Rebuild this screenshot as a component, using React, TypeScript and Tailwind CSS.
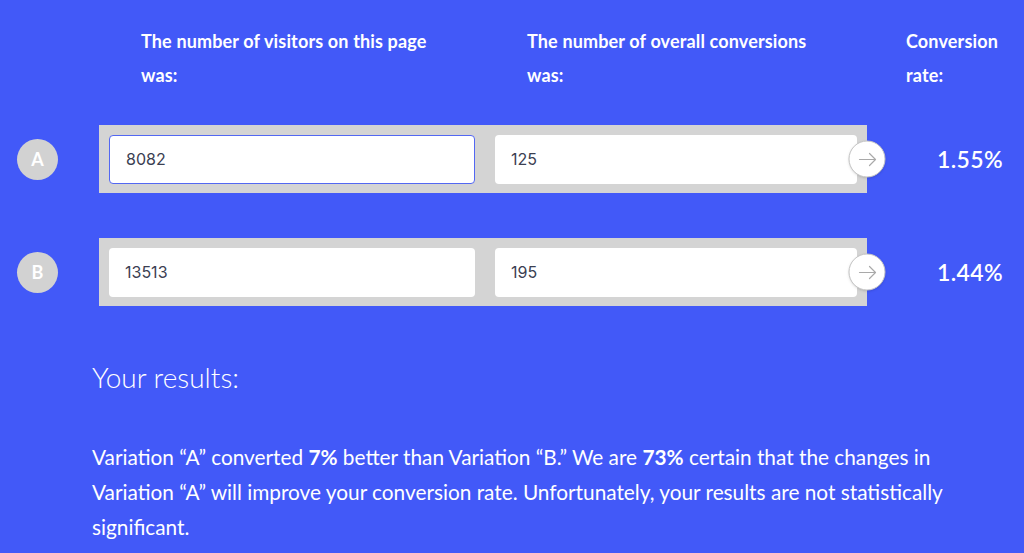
import React from 'react';

type Row = { label: string; visitors: string; conversions: string; rate: string; focused?: boolean };

const rows: Row[] = [
  { label: 'A', visitors: '8082', conversions: '125', rate: '1.55%', focused: true },
  { label: 'B', visitors: '13513', conversions: '195', rate: '1.44%' },
];

const ArrowButton = () => (
  <div className="absolute right-0 top-1/2 translate-x-1/2 -translate-y-1/2 w-[37px] h-[37px] rounded-full bg-white border border-[#c4c4c4] shadow-sm flex items-center justify-center">
    <svg width="22" height="22" viewBox="0 0 22 22" fill="none" stroke="#a9a9a9" strokeWidth="1.2" strokeLinecap="round" strokeLinejoin="round">
      <line x1="3" y1="11" x2="19" y2="11" />
      <polyline points="13,5 19,11 13,17" />
    </svg>
  </div>
);

const InputRow = ({ row }: { row: Row }) => (
  <div className="flex items-center">
    <div className="ml-[17px] w-[41px] h-[41px] rounded-full bg-[#d2d2d2] flex items-center justify-center text-white text-[18px] font-bold">
      {row.label}
    </div>
    <div className="relative ml-[41px] w-[768px] h-[68px] bg-[#d4d4d4] flex items-center gap-[20px] px-[10px]">
      <div
        className={`w-[366px] h-[49px] bg-white rounded-[4px] flex items-center pl-[16px] text-[16px] text-[#3b4052] font-['Inter'] ${
          row.focused ? 'border border-[#5367f2]' : ''
        }`}
      >
        {row.visitors}
      </div>
      <div className="flex-1 h-[49px] bg-white rounded-[4px] flex items-center pl-[16px] text-[16px] text-[#3b4052] font-['Inter']">
        {row.conversions}
      </div>
      <ArrowButton />
    </div>
    <div className="ml-[70px] text-white text-[23px] tracking-[0.4px] font-semibold">{row.rate}</div>
  </div>
);

export default function App() {
  return (
    <div className="w-[1024px] h-[553px] overflow-hidden bg-[#4259f8] font-['Lato','Liberation_Sans',sans-serif] text-white">
      {/* Column headings */}
      <div className="flex pt-[24px] pl-[141px] text-[18px] tracking-[0.15px] font-bold leading-[34px]">
        <div className="w-[386px]">
          The number of visitors on this page
          <br />
          was:
        </div>
        <div className="w-[379px]">
          The number of overall conversions
          <br />
          was:
        </div>
        <div>
          Conversion
          <br />
          rate:
        </div>
      </div>

      <div className="mt-[33px] flex flex-col gap-[45px]">
        {rows.map(r => (
          <InputRow key={r.label} row={r} />
        ))}
      </div>

      {/* Results */}
      <div className="pl-[92px] pt-[56px]">
        <h2 className="text-[28px] font-light leading-[30px]">Your results:</h2>
        <p className="mt-[47px] w-[920px] text-[20.8px] leading-[35px]">
          Variation “A” converted <b>7%</b> better than Variation “B.” We are <b>73%</b> certain that the changes in
          <br />
          Variation “A” will improve your conversion rate. Unfortunately, your results are not statistically
          <br />
          significant.
        </p>
      </div>
    </div>
  );
}
